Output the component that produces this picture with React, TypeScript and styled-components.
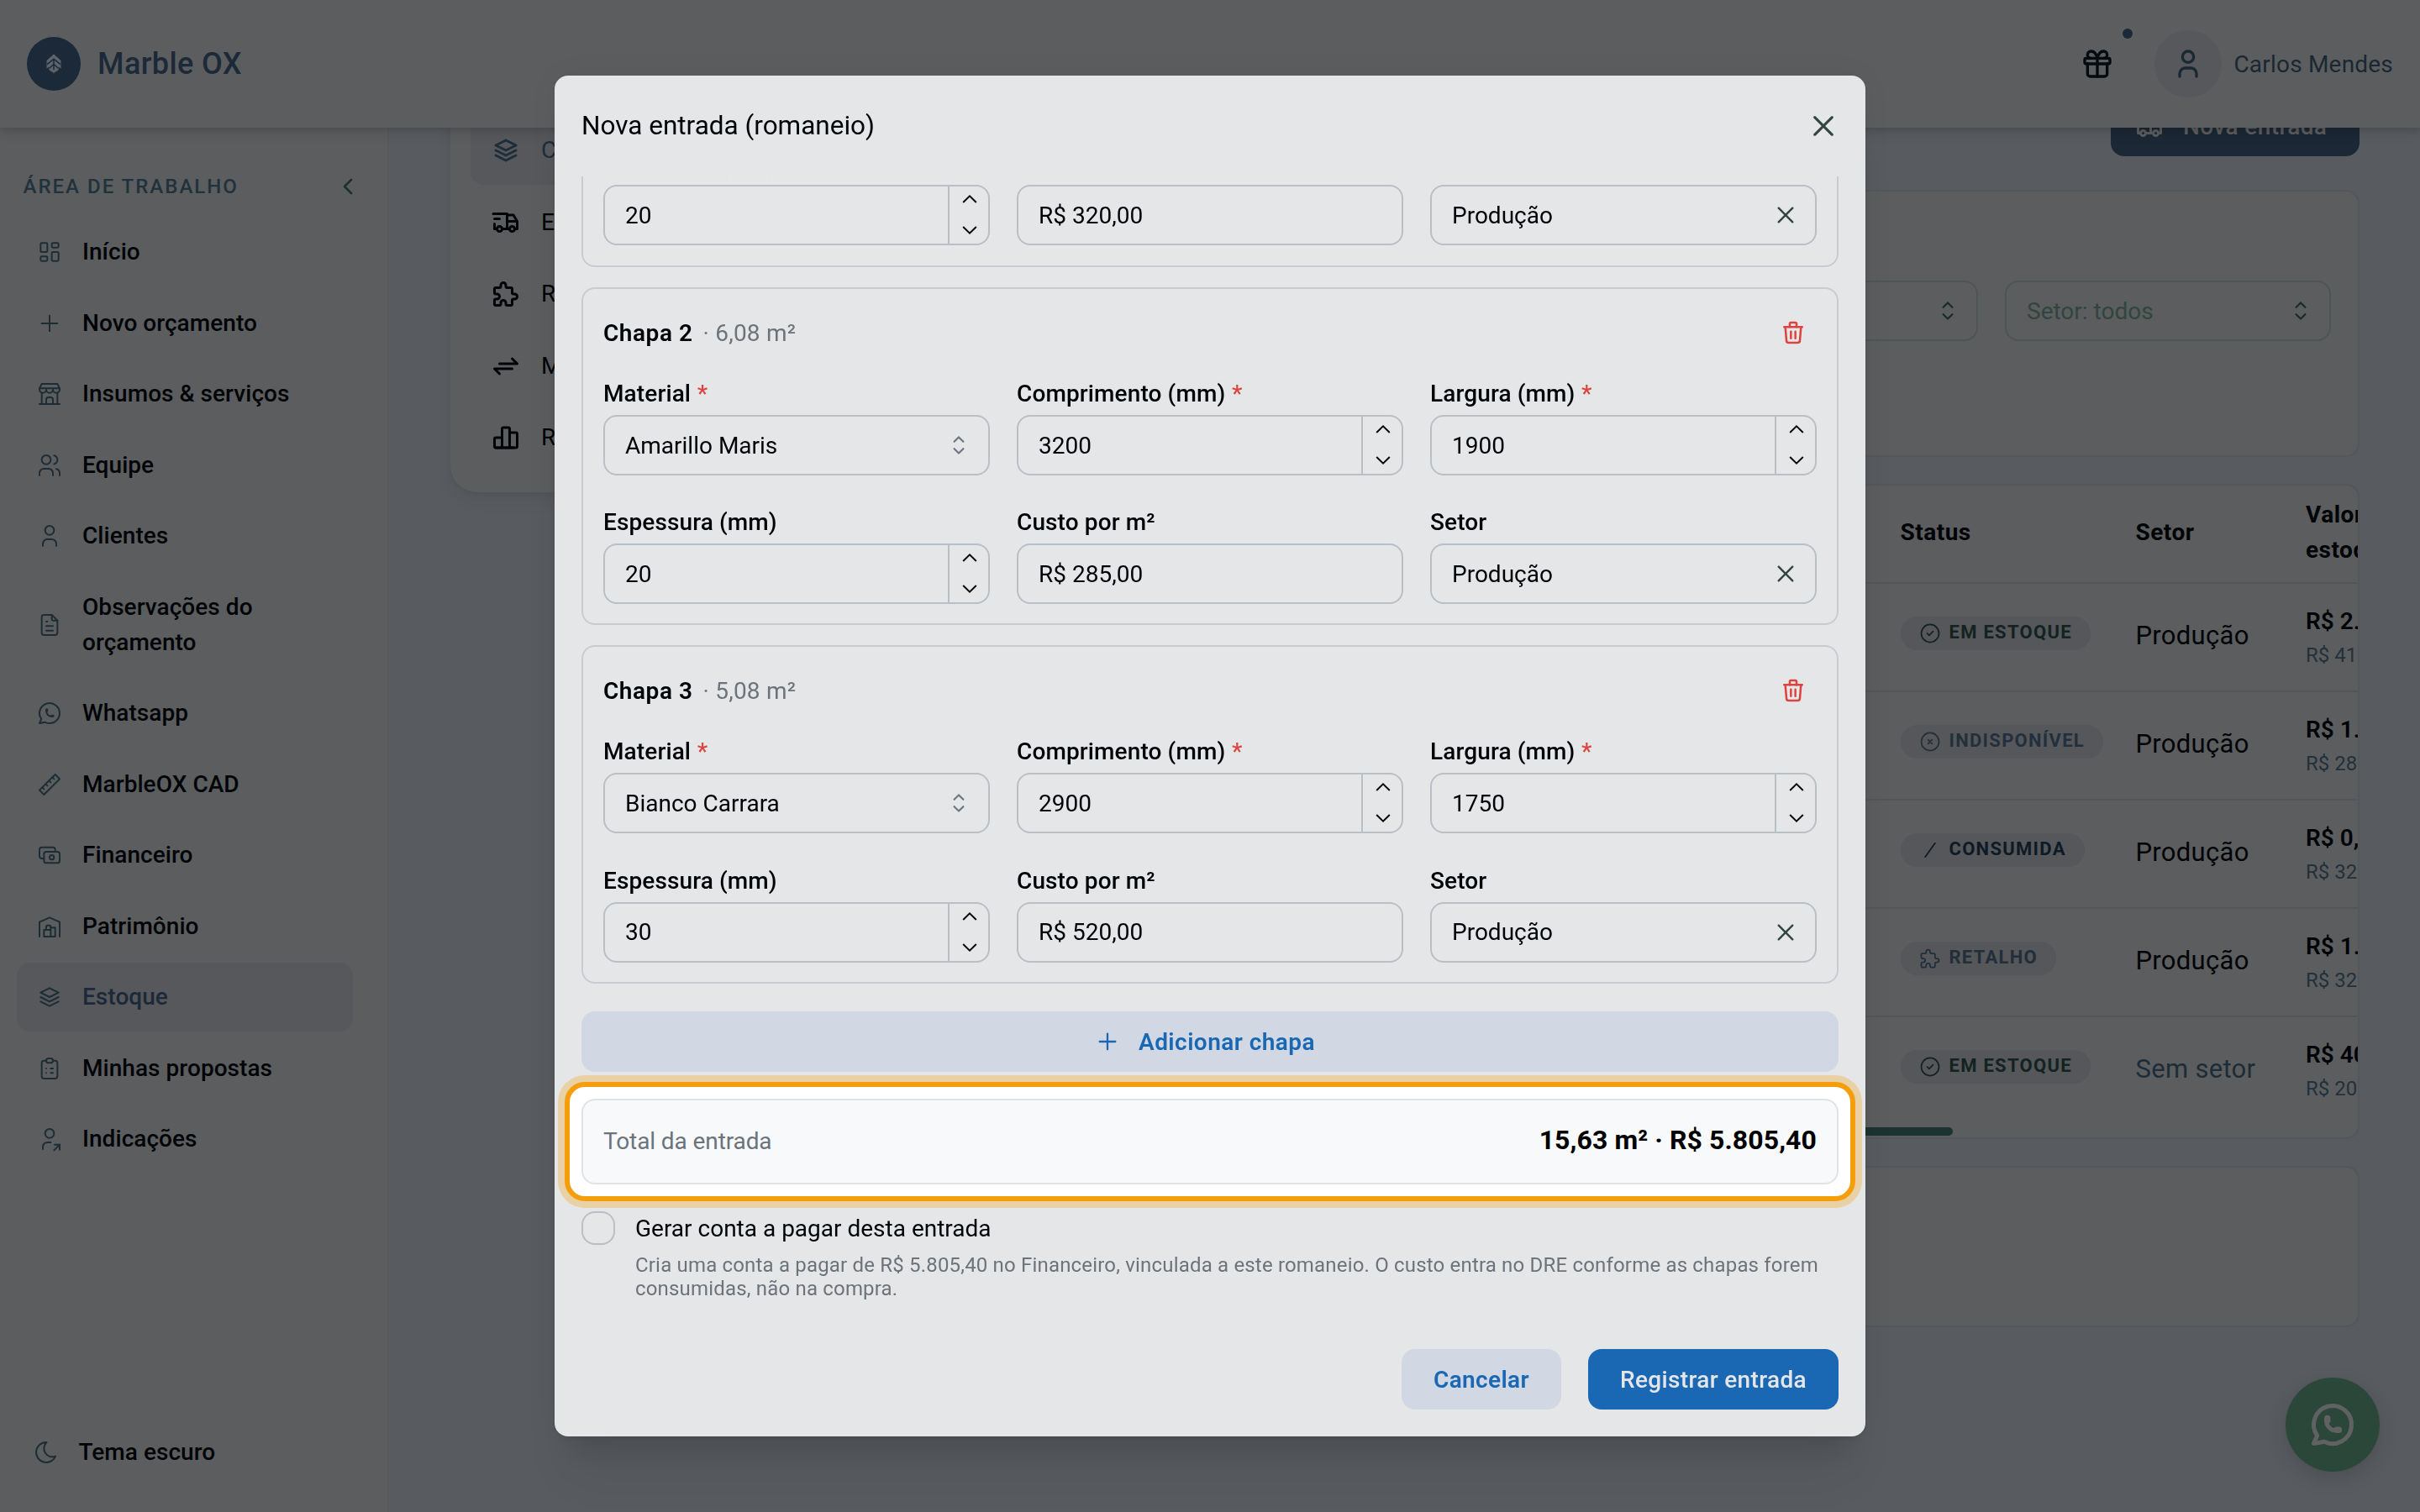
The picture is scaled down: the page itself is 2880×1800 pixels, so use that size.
import React from 'react';
import styled, { createGlobalStyle } from 'styled-components';
import {
  TbArrowsExchange,
  TbBrandWhatsapp,
  TbBuildingStore,
  TbBuildingWarehouse,
  TbCash,
  TbChartBar,
  TbChevronLeft,
  TbCircleCheck,
  TbCircleX,
  TbClipboardList,
  TbFileText,
  TbGift,
  TbLayoutDashboard,
  TbMoon,
  TbPlus,
  TbPuzzle,
  TbRuler2,
  TbSlash,
  TbStack2,
  TbTrash,
  TbTruckDelivery,
  TbUser,
  TbUsers,
  TbUserShare,
} from 'react-icons/tb';

const c = {
  surface: '#5c5d5f',
  page: '#585b60',
  soft: '#57585c',
  line: '#54575a',
  ink: '#010407',
  muted: '#1d2d36',
  brand: '#1c2938',
  modal: '#e5e6e8',
  modalLine: '#c8cbd3',
  inputLine: '#b8bfc7',
  modalMuted: '#6b737b',
  blue: '#1a68b3',
  blueSoft: '#d1d8e4',
  red: '#dc4440',
};

const GlobalStyle = createGlobalStyle`
  * { box-sizing: border-box; }
  html, body { margin: 0; padding: 0; }
  body {
    width: 2880px;
    height: 1800px;
    overflow: hidden;
    background: ${c.page};
    color: ${c.ink};
    font-family: Roboto, sans-serif;
    font-size: 28px;
    line-height: 42px;
  }
  svg { display: block; flex: none; }
`;

/* ---------- shell ---------- */

const Shell = styled.div`
  display: flex;
  flex-direction: column;
  width: 2880px;
  height: 1800px;
`;

const TopBar = styled.header`
  position: relative;
  z-index: 1;
  display: flex;
  align-items: center;
  justify-content: space-between;
  height: 152px;
  padding: 0 32px;
  background: ${c.surface};
  box-shadow: 0 2px 6px rgba(0, 0, 0, 0.1), 0 6px 14px rgba(0, 0, 0, 0.1);
`;

const Brand = styled.div`
  display: flex;
  align-items: center;
  gap: 20px;
  color: ${c.brand};
  font-size: 36px;
  font-weight: 500;
  letter-spacing: 0.4px;
`;

const BrandMark = styled.div`
  display: grid;
  place-items: center;
  width: 64px;
  height: 64px;
  border-radius: 50%;
  background: ${c.brand};
`;

const Account = styled.div`
  display: flex;
  align-items: center;
  color: #1a2833;
  letter-spacing: 0.2px;

  > span { padding-top: 2px; }
`;

const GiftButton = styled.div`
  position: relative;
  margin-right: 48px;
  color: #020a12;
`;

const Dot = styled.i`
  position: absolute;
  top: -22px;
  right: -22px;
  width: 12px;
  height: 12px;
  border-radius: 50%;
  background: ${c.brand};
`;

const Avatar = styled.div`
  display: grid;
  place-items: center;
  width: 80px;
  height: 80px;
  margin-right: 14.5px;
  border-radius: 50%;
  background: ${c.soft};
`;

const Body = styled.div`
  display: flex;
  flex: 1;
  min-height: 0;
`;

/* ---------- sidebar ---------- */

const Sidebar = styled.aside`
  display: flex;
  flex-direction: column;
  width: 463px;
  padding: 49px 41px 30px 20px;
  border-right: 2px solid #57595b;
  background: ${c.surface};
`;

const SideTitle = styled.div`
  display: flex;
  align-items: center;
  justify-content: space-between;
  height: 42px;
  margin: 0 -10px 16px 7.5px;
  color: #20323c;
  font-size: 24px;
  font-weight: 500;
  letter-spacing: 2px;
`;

const SideList = styled.nav`
  display: flex;
  flex: 1;
  flex-direction: column;
  gap: 2.5px;
`;

const SideItem = styled.a<{ $active?: boolean; $inset?: number }>`
  display: flex;
  align-items: center;
  gap: 23px;
  padding: 20px 24px 20px ${(p) => p.$inset ?? 23}px;
  border-radius: 16px;
  background: ${(p) => (p.$active ? c.soft : 'transparent')};
  color: ${(p) => (p.$active ? c.brand : c.ink)};
  font-weight: 500;
  letter-spacing: 0.05px;

  svg { color: ${c.muted}; }
`;

/* ---------- page ---------- */

const Main = styled.main`
  display: flex;
  align-items: flex-start;
  flex: 1;
  gap: 32px;
  overflow: hidden;
  padding: 0 72px 0 73px;
`;

/* The page is scrolled a little below its top, so both columns start under the top bar. */
const SectionNav = styled.nav`
  display: flex;
  flex-direction: column;
  gap: 4px;
  width: 440px;
  margin-top: -38px;
  padding: 24px;
  border-radius: 32px;
  background: ${c.surface};
  box-shadow: 0 2px 6px rgba(0, 0, 0, 0.05), 0 10px 20px rgba(0, 0, 0, 0.05);
`;

const SectionItem = styled.a<{ $active?: boolean }>`
  display: flex;
  align-items: center;
  gap: 24px;
  height: 81.5px;
  padding: 1px 24px 0;
  border-radius: 16px;
  background: ${(p) => (p.$active ? c.soft : 'transparent')};
  color: ${(p) => (p.$active ? '#1d2d3c' : c.ink)};
`;

const Column = styled.div`
  display: flex;
  flex: 1;
  flex-direction: column;
  margin-top: -38px;
`;

const PrimaryAction = styled.div`
  display: flex;
  align-items: center;
  align-self: flex-end;
  gap: 22px;
  width: 296px;
  height: 72px;
  margin-bottom: 40px;
  padding: 1px 0 0 28px;
  border-radius: 16px;
  background: #1c2835;
  color: ${c.surface};
  font-weight: 500;
  letter-spacing: 0.4px;
`;

const Panel = styled.section<{ $height: number }>`
  display: flex;
  flex-direction: column;
  height: ${(p) => p.$height}px;
  margin-bottom: 32px;
  overflow: hidden;
  border: 2px solid ${c.line};
  border-radius: 16px;
  background: ${c.surface};
`;

const Filters = styled.div`
  display: flex;
  justify-content: flex-end;
  gap: 32px;
  padding: 106px 32px 0;
`;

const Filter = styled.div`
  display: flex;
  align-items: center;
  justify-content: space-between;
  width: 388px;
  height: 72px;
  padding: 0 16px 0 24px;
  border: 2px solid #4f5456;
  border-radius: 16px;
  color: #30463d;

  svg { color: #172a2c; }
  span { margin-top: 2px; }
`;

const Row = styled.div<{ $head?: boolean }>`
  display: grid;
  grid-template-columns: 1fr 280px 202.5px 62px;
  align-items: center;
  height: ${(p) => (p.$head ? 117 : 129)}px;
  padding-bottom: ${(p) => (p.$head ? 4 : 0)}px;
  border-bottom: 2px solid ${c.line};
  font-weight: ${(p) => (p.$head ? 700 : 400)};
  letter-spacing: ${(p) => (p.$head ? 0.5 : 0)}px;
  white-space: nowrap;

  &:last-child { border-bottom-color: transparent; }
`;

const Rows = styled.div`
  display: flex;
  flex-direction: column;
`;

const Badge = styled.span<{ $tone: string }>`
  display: inline-flex;
  align-items: center;
  gap: 9px;
  height: 40px;
  margin-top: -6px;
  padding: 0 22px 0 21px;
  border-radius: 20px;
  background: #55575b;
  color: ${(p) => p.$tone};
  font-size: 22px;
  font-weight: 700;
  letter-spacing: 1.28px;

  span { margin-top: -2px; }
`;

const Sector = styled.div<{ $empty?: boolean }>`
  margin-top: -3px;
  color: ${(p) => (p.$empty ? '#1d2c36' : c.ink)};
  font-size: 31px;
  letter-spacing: 0.3px;
`;

const Money = styled.div`
  display: flex;
  flex-direction: column;
  overflow: hidden;
  padding-top: 1px;
`;

const MoneyMain = styled.span`
  font-weight: 600;
`;

const MoneySub = styled.span`
  padding-top: 1px;
  color: #22313b;
  font-size: 24px;
  line-height: 37px;
`;

const ScrollThumb = styled.div`
  flex: none;
  width: 1314px;
  height: 10px;
  margin-top: 2px;
  border-radius: 5px;
  background: #1c3331;
`;

const Fab = styled.div`
  position: fixed;
  right: 48px;
  bottom: 48px;
  display: grid;
  place-items: center;
  width: 112px;
  height: 112px;
  border-radius: 50%;
  background: #2b473a;
  color: #606163;
  box-shadow: 0 8px 24px rgba(0, 0, 0, 0.14);
`;

/* ---------- modal ---------- */

const Overlay = styled.div`
  position: fixed;
  inset: 0;
  z-index: 5;
  display: flex;
  align-items: center;
  justify-content: center;
`;

const Modal = styled.div`
  display: flex;
  flex-direction: column;
  width: 1560px;
  height: 1620px;
  border-radius: 16px;
  background: ${c.modal};
  box-shadow: 0 2px 6px rgba(0, 0, 0, 0.08), 0 60px 56px -14px rgba(0, 0, 0, 0.06),
    0 34px 34px -14px rgba(0, 0, 0, 0.09), 0 0 40px rgba(0, 0, 0, 0.04);
`;

const ModalHead = styled.div`
  display: flex;
  align-items: center;
  justify-content: space-between;
  height: 120px;
  padding: 0 30px 0 32px;
  font-size: 31.5px;

  svg {
    margin-top: -1px;
    color: #33453f;
  }
`;

const ModalBody = styled.div`
  display: flex;
  flex: 1;
  flex-direction: column;
  min-height: 0;
  overflow: hidden;
  padding: 0 32px 32px;
`;

/* Scrolled position of the list: the first slab is partly above the fold. */
const Slabs = styled.div`
  display: flex;
  flex-direction: column;
  gap: 24px;
  margin: -294.8px 0 33px;
`;

const SlabCard = styled.section`
  flex: none;
  height: 402.6px;
  padding: 24px;
  border: 2px solid ${c.modalLine};
  border-radius: 16px;
`;

const SlabHead = styled.div`
  display: flex;
  align-items: center;
  justify-content: space-between;
  height: 56px;
  padding-right: 12px;

  svg { color: ${c.red}; }
`;

const SlabTitle = styled.div`
  display: flex;
  gap: 12px;
  margin-top: 2px;
  font-weight: 600;
  letter-spacing: 0.55px;
`;

const Area = styled.span`
  color: ${c.modalMuted};
  font-weight: 400;
  letter-spacing: 0.2px;
`;

const FieldRow = styled.div<{ $gap: number }>`
  display: grid;
  grid-template-columns: repeat(3, 1fr);
  gap: 32px;
  margin-top: ${(p) => p.$gap}px;
`;

const Label = styled.div`
  height: 47px;
  padding-top: 1px;
  font-weight: 500;
  letter-spacing: 0.12px;

  em {
    margin-left: 0.5px;
    color: ${c.red};
    font-style: normal;
  }
`;

const Input = styled.div`
  display: flex;
  align-items: center;
  justify-content: space-between;
  height: 72px;
  padding-left: 24px;
  border: 2px solid ${c.inputLine};
  border-radius: 16px;
`;

const Value = styled.span`
  margin-top: 1.5px;
`;

const Adornment = styled.div<{ $color: string }>`
  display: grid;
  place-items: center;
  width: 70px;
  color: ${(p) => p.$color};
`;

const Stepper = styled.div`
  display: flex;
  flex-direction: column;
  align-items: center;
  align-self: stretch;
  justify-content: space-between;
  width: 48px;
  padding: 10px 0 11px 1px;
  border-left: 2px solid ${c.inputLine};
`;

const AddButton = styled.div`
  display: flex;
  flex: none;
  align-items: center;
  justify-content: center;
  gap: 21px;
  height: 72px;
  padding-right: 13px;
  border-radius: 16px;
  background: ${c.blueSoft};
  color: ${c.blue};
  font-weight: 600;
  letter-spacing: 0.45px;

  span { margin-top: 2px; }
`;

const Total = styled.div`
  position: relative;
  display: flex;
  flex: none;
  align-items: center;
  justify-content: space-between;
  height: 102px;
  margin: 32px 0;
  padding: 0 24px;
  border: 2px solid #e0e2e5;
  border-radius: 16px;
  background: #f8f9fb;
  color: ${c.modalMuted};
  letter-spacing: -0.1px;

  strong {
    margin-top: -3px;
    color: #000;
    font-size: 32px;
    font-weight: 700;
    letter-spacing: 0.08px;
  }
`;

/* Guided-tour ring around the total. */
const Spotlight = styled.div`
  position: absolute;
  inset: -22px;
  z-index: -1;
  border: 6px solid #f59e0b;
  border-radius: 24px;
  background: #fff;
  box-shadow: 0 0 0 8px #ead1a5;
`;

const TotalFrame = styled.div`
  position: relative;
  z-index: 0;
`;

const Option = styled.div`
  display: flex;
  gap: 24px;
`;

const Checkbox = styled.span`
  flex: none;
  width: 40px;
  height: 40px;
  border: 2px solid ${c.inputLine};
  border-radius: 16px;
`;

const OptionText = styled.div`
  padding-top: 1px;

  p {
    margin: 0;
    line-height: 40px;
  }

  small {
    display: block;
    margin-top: 9px;
    color: ${c.modalMuted};
    font-size: 24px;
    line-height: 28px;
    letter-spacing: 0.18px;
  }
`;

const Footer = styled.div`
  display: flex;
  justify-content: flex-end;
  gap: 32px;
  margin-top: auto;
`;

const Button = styled.div<{ $primary?: boolean }>`
  display: grid;
  place-items: center;
  width: ${(p) => (p.$primary ? 298 : 190)}px;
  height: 72px;
  padding-top: 2px;
  border-radius: 16px;
  background: ${(p) => (p.$primary ? c.blue : c.blueSoft)};
  color: ${(p) => (p.$primary ? c.modal : c.blue)};
  font-weight: ${(p) => (p.$primary ? 500 : 600)};
  letter-spacing: 0.35px;
`;

/* ---------- small drawings ---------- */

const CloseGlyph = ({ size }: { size: number }) => (
  <svg width={size} height={size} viewBox="0 0 15 15" fill="currentColor">
    <path d="M11.7816 4.03157C12.0062 3.80702 12.0062 3.44295 11.7816 3.2184C11.5571 2.99385 11.193 2.99385 10.9685 3.2184L7.50005 6.68682L4.03164 3.2184C3.80708 2.99385 3.44301 2.99385 3.21846 3.2184C2.99391 3.44295 2.99391 3.80702 3.21846 4.03157L6.68688 7.49999L3.21846 10.9684C2.99391 11.193 2.99391 11.5571 3.21846 11.7816C3.44301 12.0062 3.80708 12.0062 4.03164 11.7816L7.50005 8.31316L10.9685 11.7816C11.193 12.0062 11.5571 12.0062 11.7816 11.7816C12.0062 11.5571 12.0062 11.193 11.7816 10.9684L8.31322 7.49999L11.7816 4.03157Z" />
  </svg>
);

const CaretGlyph = () => (
  <svg width="36" height="36" viewBox="0 0 15 15" fill="currentColor">
    <path d="M4.93179 5.43179C4.75605 5.60753 4.75605 5.89245 4.93179 6.06819C5.10753 6.24392 5.39245 6.24392 5.56819 6.06819L7.49999 4.13638L9.43179 6.06819C9.60753 6.24392 9.89245 6.24392 10.0682 6.06819C10.2439 5.89245 10.2439 5.60753 10.0682 5.43179L7.81819 3.18179C7.73379 3.0974 7.61933 3.04999 7.49999 3.04999C7.38064 3.04999 7.26618 3.0974 7.18179 3.18179L4.93179 5.43179ZM10.0682 9.56819C10.2439 9.39245 10.2439 9.10753 10.0682 8.93179C9.89245 8.75606 9.60753 8.75606 9.43179 8.93179L7.49999 10.8636L5.56819 8.93179C5.39245 8.75606 5.10753 8.75606 4.93179 8.93179C4.75605 9.10753 4.75605 9.39245 4.93179 9.56819L7.18179 11.8182C7.35753 11.9939 7.64245 11.9939 7.81819 11.8182L10.0682 9.56819Z" />
  </svg>
);

const StepGlyph = ({ down }: { down?: boolean }) => (
  <svg width="18" height="10" viewBox="0 0 18 10" fill="none" stroke="#05090b" strokeWidth="2">
    <path d={down ? 'M1.2 1 L9 8.6 L16.8 1' : 'M1.2 9 L9 1.4 L16.8 9'} />
  </svg>
);

const LogoGlyph = () => (
  <svg width="20" height="24" viewBox="0 0 20 24" fill="#5d646c">
    <path d="M10 0.5 L18.5 8 V17.5 L15.6 15.4 V19.2 L12.2 21.4 H7.8 L4.4 19.2 V15.4 L1.5 17.5 V8 Z" />
    <path
      d="M2 12.6 L10 6.2 L18 12.6 M4.6 17.2 L10 12.4 L15.4 17.2 M10 6.2 V19"
      fill="none"
      stroke={c.brand}
      strokeWidth="1.5"
    />
    <circle cx="10" cy="20.8" r="1.9" />
  </svg>
);

/* ---------- data ---------- */

const sideItems = [
  { icon: TbLayoutDashboard, label: 'Início' },
  { icon: TbPlus, label: 'Novo orçamento' },
  { icon: TbBuildingStore, label: 'Insumos & serviços' },
  { icon: TbUsers, label: 'Equipe' },
  { icon: TbUser, label: 'Clientes' },
  { icon: TbFileText, label: 'Observações do orçamento' },
  { icon: TbBrandWhatsapp, label: 'Whatsapp' },
  { icon: TbRuler2, label: 'MarbleOX CAD' },
  { icon: TbCash, label: 'Financeiro' },
  { icon: TbBuildingWarehouse, label: 'Patrimônio' },
  { icon: TbStack2, label: 'Estoque', active: true },
  { icon: TbClipboardList, label: 'Minhas propostas' },
  { icon: TbUserShare, label: 'Indicações' },
];

const sections = [
  { icon: TbStack2, label: 'Chapas', active: true },
  { icon: TbTruckDelivery, label: 'Entradas' },
  { icon: TbPuzzle, label: 'Retalhos' },
  { icon: TbArrowsExchange, label: 'Movimentações' },
  { icon: TbChartBar, label: 'Relatórios' },
];

const stock = [
  { icon: TbCircleCheck, status: 'EM ESTOQUE', tone: '#13231f', sector: 'Produção', value: 'R$ 2.', unit: 'R$ 41' },
  { icon: TbCircleX, status: 'INDISPONÍVEL', tone: '#23303c', sector: 'Produção', value: 'R$ 1.', unit: 'R$ 28' },
  { icon: TbSlash, status: 'CONSUMIDA', tone: '#0e1a25', sector: 'Produção', value: 'R$ 0,', unit: 'R$ 32' },
  { icon: TbPuzzle, status: 'RETALHO', tone: '#222e39', sector: 'Produção', value: 'R$ 1.', unit: 'R$ 32' },
  { icon: TbCircleCheck, status: 'EM ESTOQUE', tone: '#13231f', sector: '', value: 'R$ 40', unit: 'R$ 20' },
];

const slabs = [
  { n: 1, area: '4,47', material: 'Branco Siena', length: '2800', width: '1600', thick: '20', cost: 'R$ 320,00' },
  { n: 2, area: '6,08', material: 'Amarillo Maris', length: '3200', width: '1900', thick: '20', cost: 'R$ 285,00' },
  { n: 3, area: '5,08', material: 'Bianco Carrara', length: '2900', width: '1750', thick: '30', cost: 'R$ 520,00' },
];

/* ---------- fields ---------- */

type FieldProps = { label: string; value: string; required?: boolean; kind?: 'number' | 'select' | 'clearable' };

const Field = ({ label, value, required, kind }: FieldProps) => (
  <div>
    <Label>
      {label} {required && <em>*</em>}
    </Label>
    <Input>
      <Value>{value}</Value>
      {kind === 'number' && (
        <Stepper>
          <StepGlyph />
          <StepGlyph down />
        </Stepper>
      )}
      {kind === 'select' && (
        <Adornment $color="#6e7780">
          <CaretGlyph />
        </Adornment>
      )}
      {kind === 'clearable' && (
        <Adornment $color="#33453f">
          <CloseGlyph size={32} />
        </Adornment>
      )}
    </Input>
  </div>
);

const Slab = ({ slab }: { slab: (typeof slabs)[number] }) => (
  <SlabCard>
    <SlabHead>
      <SlabTitle>
        Chapa {slab.n} <Area>· {slab.area} m²</Area>
      </SlabTitle>
      <TbTrash size={32} strokeWidth={1.9} />
    </SlabHead>
    <FieldRow $gap={23}>
      <Field label="Material" value={slab.material} kind="select" required />
      <Field label="Comprimento (mm)" value={slab.length} kind="number" required />
      <Field label="Largura (mm)" value={slab.width} kind="number" required />
    </FieldRow>
    <FieldRow $gap={34.2}>
      <Field label="Espessura (mm)" value={slab.thick} kind="number" />
      <Field label="Custo por m²" value={slab.cost} />
      <Field label="Setor" value="Produção" kind="clearable" />
    </FieldRow>
  </SlabCard>
);

export default function App() {
  return (
    <>
      <GlobalStyle />
      <Shell>
        <TopBar>
          <Brand>
            <BrandMark>
              <LogoGlyph />
            </BrandMark>
            Marble OX
          </Brand>
          <Account>
            <GiftButton>
              <TbGift size={40} />
              <Dot />
            </GiftButton>
            <Avatar>
              <TbUser size={40} />
            </Avatar>
            <span>Carlos Mendes</span>
          </Account>
        </TopBar>
        <Body>
          <Sidebar>
            <SideTitle>
              ÁREA DE TRABALHO
              <TbChevronLeft size={32} color="#1b302f" />
            </SideTitle>
            <SideList>
              {sideItems.map(({ icon: Icon, label, active }) => (
                <SideItem key={label} $active={active}>
                  <Icon size={32} strokeWidth={1.5} />
                  {label}
                </SideItem>
              ))}
            </SideList>
            <SideItem $inset={18.5}>
              <TbMoon size={32} strokeWidth={1.5} />
              Tema escuro
            </SideItem>
          </Sidebar>
          <Main>
            <SectionNav>
              {sections.map(({ icon: Icon, label, active }) => (
                <SectionItem key={label} $active={active}>
                  <Icon size={36} />
                  {label}
                </SectionItem>
              ))}
            </SectionNav>
            <Column>
              <PrimaryAction>
                <TbTruckDelivery size={36} />
                Nova entrada
              </PrimaryAction>
              <Panel $height={318}>
                <Filters>
                  <Filter>
                    <span />
                    <CaretGlyph />
                  </Filter>
                  <Filter>
                    <span>Setor: todos</span>
                    <CaretGlyph />
                  </Filter>
                </Filters>
              </Panel>
              <Panel $height={780}>
                <Rows>
                  <Row $head>
                    <span />
                    <span>Status</span>
                    <span>Setor</span>
                    <Money>
                      <span>Valor</span>
                      <span>estoque</span>
                    </Money>
                  </Row>
                  {stock.map(({ icon: Icon, status, tone, sector, value, unit }, i) => (
                    <Row key={i}>
                      <span />
                      <div>
                        <Badge $tone={tone}>
                          <Icon size={28} strokeWidth={1.5} />
                          <span>{status}</span>
                        </Badge>
                      </div>
                      <Sector $empty={!sector}>{sector || 'Sem setor'}</Sector>
                      <Money>
                        <MoneyMain>{value}</MoneyMain>
                        <MoneySub>{unit}</MoneySub>
                      </Money>
                    </Row>
                  ))}
                </Rows>
                <ScrollThumb />
              </Panel>
              <Panel $height={192} />
            </Column>
          </Main>
        </Body>
        <Fab>
          <TbBrandWhatsapp size={60} />
        </Fab>
      </Shell>
      <Overlay>
        <Modal>
          <ModalHead>
            Nova entrada (romaneio)
            <CloseGlyph size={40} />
          </ModalHead>
          <ModalBody>
            <Slabs>
              {slabs.map((slab) => (
                <Slab key={slab.n} slab={slab} />
              ))}
            </Slabs>
            <AddButton>
              <TbPlus size={32} strokeWidth={1.7} />
              <span>Adicionar chapa</span>
            </AddButton>
            <TotalFrame>
              <Total>
                <Spotlight />
                Total da entrada
                <strong>15,63 m² · R$ 5.805,40</strong>
              </Total>
            </TotalFrame>
            <Option>
              <Checkbox />
              <OptionText>
                <p>Gerar conta a pagar desta entrada</p>
                <small>
                  Cria uma conta a pagar de R$ 5.805,40 no Financeiro, vinculada a este romaneio. O custo entra no DRE
                  conforme as chapas forem consumidas, não na compra.
                </small>
              </OptionText>
            </Option>
            <Footer>
              <Button>Cancelar</Button>
              <Button $primary>Registrar entrada</Button>
            </Footer>
          </ModalBody>
        </Modal>
      </Overlay>
    </>
  );
}
